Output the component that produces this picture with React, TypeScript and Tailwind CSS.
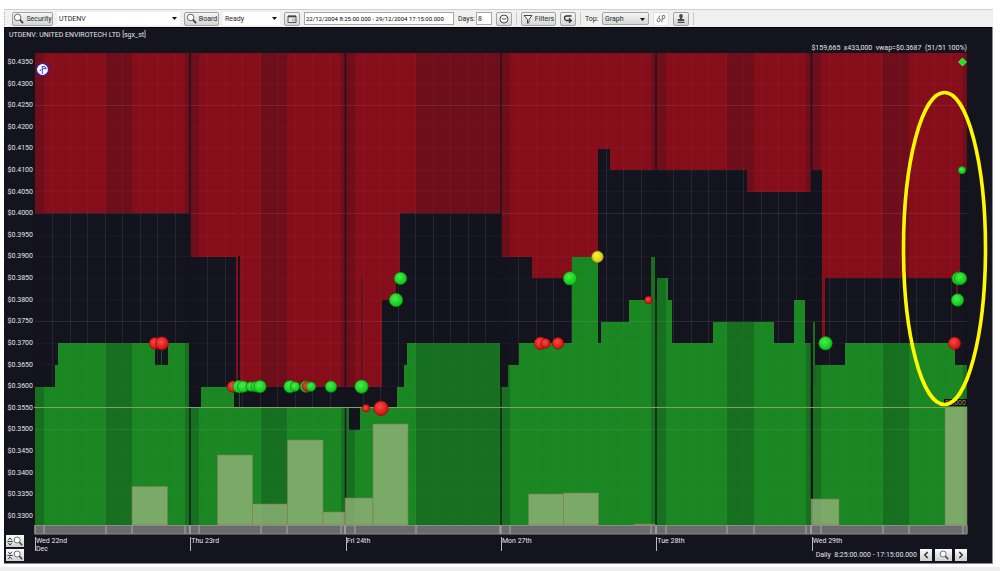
import type { ReactNode } from "react";
import { ChevronLeft, ChevronRight } from "lucide-react";

type Step = [from: number, to: number, price: number];
type Side = "buy" | "sell" | "cross" | "auction";

// Lowest ask over time, the red area hangs from the top of the plot
const askSteps: Step[] = [
  [35, 190, 0.4],
  [190, 236, 0.39],
  [236, 238, 0.36],
  [240, 382, 0.36],
  [382, 396, 0.38],
  [396, 400, 0.385],
  [400, 501, 0.4],
  [501, 532, 0.39],
  [532, 572, 0.385],
  [572, 598, 0.39],
  [598, 610, 0.415],
  [610, 747, 0.41],
  [747, 811, 0.405],
  [811, 822, 0.41],
  [822, 825, 0.37],
  [825, 960, 0.385],
  [960, 967, 0.41],
];

// Highest bid over time, the green area stands on the bottom
const bidSteps: Step[] = [
  [35, 55, 0.36],
  [55, 58, 0.365],
  [58, 155, 0.37],
  [155, 168, 0.365],
  [168, 189, 0.37],
  [189, 201, 0.355],
  [201, 234, 0.36],
  [234, 349, 0.355],
  [349, 360, 0.35],
  [360, 397, 0.355],
  [397, 404, 0.36],
  [404, 407, 0.365],
  [407, 500, 0.37],
  [500, 508, 0.36],
  [508, 519, 0.365],
  [519, 572, 0.37],
  [572, 598, 0.39],
  [598, 601, 0.37],
  [601, 629, 0.375],
  [629, 651, 0.38],
  [651, 655, 0.39],
  [655, 657, 0.38],
  [657, 668, 0.385],
  [668, 672, 0.38],
  [672, 713, 0.37],
  [713, 774, 0.375],
  [774, 794, 0.37],
  [794, 805, 0.38],
  [805, 811, 0.37],
  [813, 815, 0.375],
  [815, 845, 0.365],
  [845, 955, 0.37],
  [955, 967, 0.365],
];

// Pre-open, lunch and close
const quietBands = [
  [35, 44],
  [106, 132],
  [185, 190],
  [190, 199],
  [261, 287],
  [341, 345],
  [345, 355],
  [416, 500],
  [501, 510],
  [651, 656],
  [656, 666],
  [727, 754],
  [806, 811],
  [811, 821],
  [883, 909],
  [963, 967],
];

const volumes = [
  [132, 167.5, 486.5],
  [217.5, 252.5, 455],
  [252.5, 287.5, 504],
  [287.5, 323, 440],
  [323, 345, 512],
  [345, 373, 498],
  [373, 408, 424],
  [528.5, 563.5, 494],
  [563.5, 598.5, 493],
  [634, 655, 524],
  [811, 839, 499],
  [945, 967, 407.5],
];

const trades: { x: number; price: number; r: number; side: Side }[] = [
  { x: 155, price: 0.37, r: 6, side: "sell" },
  { x: 162, price: 0.37, r: 6.8, side: "sell" },
  { x: 233, price: 0.36, r: 6, side: "sell" },
  { x: 239, price: 0.36, r: 6.5, side: "buy" },
  { x: 243, price: 0.36, r: 6, side: "buy" },
  { x: 251, price: 0.36, r: 5, side: "buy" },
  { x: 256, price: 0.36, r: 5.5, side: "buy" },
  { x: 260, price: 0.36, r: 6.5, side: "buy" },
  { x: 290, price: 0.36, r: 6.5, side: "buy" },
  { x: 295, price: 0.36, r: 5, side: "buy" },
  { x: 306, price: 0.36, r: 6, side: "buy" },
  { x: 307, price: 0.36, r: 5, side: "sell" },
  { x: 311, price: 0.36, r: 5, side: "buy" },
  { x: 331, price: 0.36, r: 6, side: "buy" },
  { x: 361.5, price: 0.36, r: 7, side: "buy" },
  { x: 366, price: 0.355, r: 4, side: "sell" },
  { x: 381, price: 0.355, r: 7.5, side: "sell" },
  { x: 396, price: 0.38, r: 7, side: "buy" },
  { x: 400.5, price: 0.385, r: 6.5, side: "buy" },
  { x: 540.5, price: 0.37, r: 6.5, side: "sell" },
  { x: 545.5, price: 0.37, r: 5, side: "sell" },
  { x: 558, price: 0.37, r: 6, side: "sell" },
  { x: 570, price: 0.385, r: 7, side: "buy" },
  { x: 597.5, price: 0.39, r: 6, side: "cross" },
  { x: 648.5, price: 0.38, r: 4, side: "sell" },
  { x: 825.5, price: 0.37, r: 7, side: "buy" },
  { x: 954.5, price: 0.37, r: 6.5, side: "sell" },
  { x: 957.5, price: 0.38, r: 6.5, side: "buy" },
  { x: 958.5, price: 0.385, r: 6.8, side: "buy" },
  { x: 960.5, price: 0.385, r: 6.5, side: "buy" },
  { x: 962, price: 0.41, r: 4, side: "buy" },
  { x: 962.5, price: 0.435, r: 4, side: "auction" },
];

const days = ["Wed 22nd", "Thu 23rd", "Fri 24th", "Mon 27th", "Tue 28th", "Wed 29th"];
const dayStarts = [35, 190, 345.5, 501, 656, 811.5];
const prices = Array.from({ length: 22 }, (_, i) => 0.435 - i * 0.005);

const TOP = 53;
const BOTTOM = 525;

const yOf = (price: number) => 62 + ((0.435 - price) / 0.005) * 21.64;

const sideFill: Record<Side, string> = {
  buy: "url(#buy)",
  sell: "url(#sell)",
  cross: "url(#cross)",
  auction: "#12e81c",
};

const sideEdge: Record<Side, string> = {
  buy: "#078a0d",
  sell: "#95090c",
  cross: "#98900a",
  auction: "#9af59c",
};

function Ball({ id, from, to }: { id: string; from: string; to: string }) {
  return (
    <radialGradient id={id} cx="42%" cy="38%" r="62%">
      <stop offset="0" stopColor={from} />
      <stop offset="1" stopColor={to} />
    </radialGradient>
  );
}

function DepthChart() {
  return (
    <svg
      viewBox="35 53 932 482"
      className="block h-auto min-w-0 flex-1 overflow-visible"
      role="img"
      aria-label="Bid, ask and trades"
    >
      <defs>
        <Ball id="buy" from="#4ced4c" to="#08c414" />
        <Ball id="sell" from="#fb4a42" to="#cf0c10" />
        <Ball id="cross" from="#f6f04a" to="#d3c808" />
      </defs>

      <g shapeRendering="crispEdges">
        {askSteps.map(([from, to, price]) => (
          <rect key={from} x={from} y={TOP} width={to - from} height={yOf(price) - TOP} fill="#860e1b" />
        ))}
        {bidSteps.map(([from, to, price]) => (
          <rect key={from} x={from} y={yOf(price)} width={to - from} height={BOTTOM - yOf(price)} fill="#1a8722" />
        ))}
        {quietBands.map(([from, to]) => (
          <rect key={from} x={from} y={TOP} width={to - from} height={BOTTOM - TOP} fill="#101018" opacity={0.2} />
        ))}
      </g>

      {/* Grid */}
      <g stroke="#aab" shapeRendering="crispEdges">
        {dayStarts.map((start) =>
          [1, 2, 3, 4, 5, 6, 7, 8].map((i) => (
            <path key={`${start}-${i}`} d={`M${start + i * 17.55} ${TOP}V${BOTTOM}`} opacity={0.045} />
          ))
        )}
        {dayStarts.map((start) =>
          [1, 2, 3, 4, 5, 6, 7, 8].map((i) => {
            const x = start + i * 17.55;
            const ask = askSteps.find(([from, to]) => x >= from && x < to);
            const bid = bidSteps.find(([from, to]) => x >= from && x < to);
            if (!ask || !bid) return null;
            return <path key={`${start}-${i}`} d={`M${x} ${yOf(ask[2])}V${yOf(bid[2])}`} opacity={0.08} />;
          })
        )}
        {prices.map((price, i) => (
          <path key={price} d={`M35 ${yOf(price)}H967`} opacity={i % 5 === 2 ? 0.14 : 0.04} />
        ))}
      </g>

      {/* Spikes of a single quote */}
      <path d="M239 53V256" stroke="#860e1b" strokeWidth="2" />
      <path d="M362 278V386" stroke="#3c1420" />
      <path d="M957 282V298" stroke="#860e1b" strokeWidth="1.5" />
      <path d="M814.5 365V386" stroke="#1a6020" strokeWidth="1.5" />
      <path d="M161.5 344V365M239.5 387V408" stroke="#1a5a22" />
      {dayStarts.slice(1).map((x) => (
        <path key={x} d={`M${x} ${TOP}V${BOTTOM}`} stroke="#15151b" strokeWidth="1.6" opacity={0.85} />
      ))}

      {volumes.map(([from, to, top]) => (
        <rect
          key={from}
          x={from}
          y={top}
          width={to - from}
          height={BOTTOM - top}
          fill="#92b17b"
          fillOpacity={0.8}
          stroke="#7e7d52"
          strokeOpacity={0.6}
        />
      ))}
      <path d="M34 407.5H967" stroke="#86a062" />
      <rect x="944" y="399" width="23" height="7" fill="#07080c" />
      <text x="966" y="405" textAnchor="end" fontSize="7" fill="#a08f6c">
        95,000
      </text>

      {/* Session strip */}
      <rect x="34.5" y="525" width="932.5" height="9" fill="#6b6b6b" />
      <path d="M34.5 525.5H967M34.5 534H967" stroke="#8b8b8b" />
      {quietBands.flat().map((x) => (
        <path key={x} d={`M${x} 525.5V534`} stroke="#aaa" />
      ))}

      {trades.map(({ x, price, r, side }, i) => {
        const y = yOf(price);
        return side === "auction" ? (
          <path
            key={i}
            d={`M${x} ${y - r}l${r} ${r}l${-r} ${r}l${-r} ${-r}z`}
            fill={sideFill[side]}
            stroke={sideEdge[side]}
            strokeWidth="0.6"
          />
        ) : (
          <circle key={i} cx={x} cy={y} r={r - 0.3} fill={sideFill[side]} stroke={sideEdge[side]} strokeWidth="0.7" />
        );
      })}

      {/* News marker */}
      <circle cx="42.5" cy="69.5" r="6" fill="#fff" stroke="#2821b8" strokeWidth="1.2" />
      <path d="M42.3 74V66.5H44.5L46 68.8H42.3M41 69.5L39.8 71" fill="none" stroke="#4b45d0" strokeWidth="1.1" />

      <ellipse cx="944.5" cy="248.5" rx="41" ry="156" fill="none" stroke="#fff900" strokeWidth="3.6" />
    </svg>
  );
}

function Lens({ className = "size-[11px]" }: { className?: string }) {
  return (
    <svg viewBox="0 0 12 12" className={`${className} shrink-0`} fill="none" aria-hidden="true">
      <circle cx="5" cy="4.8" r="3.6" fill="#fff" stroke="#55585c" />
      <path d="M7.7 7.5L11 11" stroke="#3c3c3c" strokeWidth="1.8" />
    </svg>
  );
}

function ToolButton({ label, className, children }: { label?: string; className: string; children: ReactNode }) {
  return (
    <button
      type="button"
      aria-label={label}
      className={`flex h-[14px] shrink-0 items-center justify-center gap-[2px] rounded-[2px] border border-[#a3a3a3] bg-linear-to-b from-[#f6f6f6] to-[#d6d6d6] ${className}`}
    >
      {children}
    </button>
  );
}

function Picker({ label, value, className }: { label: string; value: string; className: string }) {
  return (
    <div className={`relative h-[13px] shrink-0 ${className}`}>
      <select aria-label={label} className="block h-full w-full appearance-none rounded-[2px] bg-transparent pl-[2px] outline-none">
        <option>{value}</option>
      </select>
      <svg viewBox="0 0 5 3" className="pointer-events-none absolute top-[5px] right-[3px] h-[3px] w-[5px]" aria-hidden="true">
        <path d="M0 0H5L2.5 3z" fill="#111" />
      </svg>
    </div>
  );
}

function Separator() {
  return <div className="h-[13px] w-px shrink-0 bg-[#c9c9c9]" />;
}

function Toolbar() {
  return (
    <div className="flex h-[18px] items-center gap-1 overflow-hidden border-t border-[#cfcfd4] bg-[#f0f0f0] text-[#2a2a2a]">
      <div className="h-[13px] shrink-0 border-l border-dotted border-[#aaa] pl-[3px]" />
      <ToolButton className="w-[41px]">
        <Lens />
        Security
      </ToolButton>
      <Picker label="Security" value="UTDENV" className="w-[123px] bg-white" />
      <ToolButton className="w-[35px]">
        <Lens />
        Board
      </ToolButton>
      <Picker label="Board" value="Ready" className="w-[57px] bg-white" />
      <ToolButton label="Calendar" className="w-4">
        <svg viewBox="0 0 10 8" className="h-2 w-[10px]" fill="none">
          <path d="M1 1H9V7.5H1z" fill="#eee" stroke="#555" />
          <path d="M1 1.5H9" stroke="#444" strokeWidth="1.6" />
          <path d="M5.5 4H7.5V6H5.5z" stroke="#999" strokeWidth=".7" />
        </svg>
      </ToolButton>
      <input
        aria-label="Period"
        defaultValue="22/12/2004 8:25:00.000 - 29/12/2004 17:15:00.000"
        className="h-[13px] w-[150px] shrink-0 border border-[#a9a9a9] bg-white px-px text-[6px] text-black outline-none"
      />
      <label className="flex shrink-0 items-center gap-[2px]">
        <span className="w-4">Days:</span>
        <input defaultValue="8" className="h-[13px] w-4 border border-[#a9a9a9] bg-white px-px outline-none" />
      </label>
      <ToolButton label="Now" className="w-4">
        <svg viewBox="0 0 10 10" className="size-[10px]" fill="none" stroke="#4a4a4a">
          <circle cx="5" cy="5" r="4" fill="#f4f4f4" />
          <path d="M3 4L5 5.5L7.5 4" strokeWidth=".9" />
        </svg>
      </ToolButton>
      <Separator />
      <ToolButton className="w-[35px]">
        <svg viewBox="0 0 10 10" className="size-[10px] shrink-0" fill="none" stroke="#444">
          <path d="M1 1.5H9L6 5.5V8.5L4.5 9.3V5.5z" fill="#fafafa" />
        </svg>
        Filters
      </ToolButton>
      <ToolButton label="Reset" className="w-4">
        <svg viewBox="0 0 10 10" className="size-[10px]" fill="none" stroke="#333" strokeWidth="1.3">
          <path d="M8.5 2H3.5Q1.5 2 1.5 4T3.5 6.5H8M6 4.3L8.3 6.5L6 8.8" />
        </svg>
      </ToolButton>
      <Separator />
      <span className="w-[13px] shrink-0">Top:</span>
      <Picker
        label="Top"
        value="Graph"
        className="w-[47px] rounded-[2px] border border-[#a3a3a3] bg-linear-to-b from-[#f6f6f6] to-[#d6d6d6]"
      />
      <button type="button" aria-label="Link" className="flex h-[14px] w-4 shrink-0 items-center justify-center border border-[#e2e2e2] bg-[#fafafa]">
        <svg viewBox="0 0 10 9" className="h-[9px] w-[10px]" fill="none" stroke="#777">
          <path d="M2.5 4L4 1.5M1.2 5.5Q2.5 3 4 5T2 8Q.8 7.5 1.2 5.5M5.8 8L6.5 1.5Q9 .5 9 2.8T6.3 5" />
        </svg>
      </button>
      <ToolButton label="Stamp" className="w-4">
        <svg viewBox="0 0 8 9" className="h-[9px] w-2" fill="#454b55">
          <circle cx="4" cy="2" r="1.9" />
          <path d="M3.2 3H4.8L5.2 5H7.2V7.2H.8V5H2.8zM.6 8H7.4V9H.6z" />
        </svg>
      </ToolButton>
      <Separator />
    </div>
  );
}

function PanelButton({ label, className, children }: { label: string; className: string; children: ReactNode }) {
  return (
    <button
      type="button"
      aria-label={label}
      className={`flex h-3 items-center justify-center bg-linear-to-b from-[#fbfbfb] to-[#cfcfcf] text-[#333] ${className}`}
    >
      {children}
    </button>
  );
}

export default function App() {
  return (
    <main className="min-h-screen bg-[#efeded] font-[Roboto,'Liberation_Sans',sans-serif] text-[7px] leading-[8px]">
      <div className="bg-white pt-[9px] pr-[7px] pb-[3px] pl-1">
        <Toolbar />
        <section className="border-r border-b border-[#8b8b93] bg-[#14141f] text-[#e4e4e8]">
          <header className="border-t border-black pt-[2px] pr-[25px] pb-px pl-[5px]">
            <h1 className="h-[14px] leading-[10px]">UTDENV: UNITED ENVIROTECH LTD [sgx_st]</h1>
            <p className="h-2 text-right whitespace-pre">$159,665  x433,000  vwap=$0.3687  (51/51 100%)</p>
          </header>

          <div className="flex pr-[25px]">
            <ol className="flex w-[31px] shrink-0 flex-col justify-between pr-[2px] pb-[10px] text-right">
              {prices.map((price) => (
                <li key={price} className="leading-[18px]">
                  ${price.toFixed(4)}
                </li>
              ))}
            </ol>
            <DepthChart />
          </div>

          <footer className="flex pr-[25px] pb-[2px]">
            <div className="flex w-[31px] shrink-0 flex-col gap-[2px] pl-[2px]">
              <PanelButton label="Zoom vertically" className="w-[18px]">
                <svg viewBox="0 0 6 10" className="h-[9px] w-[6px]" fill="none" stroke="#333">
                  <path d="M1 3.5L3 1L5 3.5M0 5H6M1 6.5L3 9L5 6.5" />
                </svg>
                <Lens className="size-[10px]" />
              </PanelButton>
              <PanelButton label="Reset zoom" className="w-[18px]">
                <svg viewBox="0 0 6 10" className="h-[9px] w-[6px]" fill="none" stroke="#333">
                  <path d="M1 1L3 3.5L5 1M0 5H6M1 9L3 6.5L5 9" />
                </svg>
                <Lens className="size-[10px]" />
              </PanelButton>
            </div>
            <div className="min-w-0 flex-1">
              <ol className="grid h-[14px] grid-cols-6 pt-[2px]">
                {days.map((day, i) => (
                  <li key={day} className="h-[14px] border-l border-[#b8b8b8] leading-[8px]">
                    {day}
                    {i === 0 && <div>Dec</div>}
                  </li>
                ))}
              </ol>
              <div className="flex items-center justify-end gap-[3px]">
                <span>Daily&nbsp; 8:25:00.000 - 17:15:00.000</span>
                <PanelButton label="Previous day" className="w-3">
                  <ChevronLeft className="size-[10px]" strokeWidth={4} />
                </PanelButton>
                <PanelButton label="Choose day" className="w-[17px]">
                  <Lens className="size-[10px]" />
                </PanelButton>
                <PanelButton label="Next day" className="w-3">
                  <ChevronRight className="size-[10px]" strokeWidth={4} />
                </PanelButton>
              </div>
            </div>
          </footer>
        </section>
      </div>
    </main>
  );
}
